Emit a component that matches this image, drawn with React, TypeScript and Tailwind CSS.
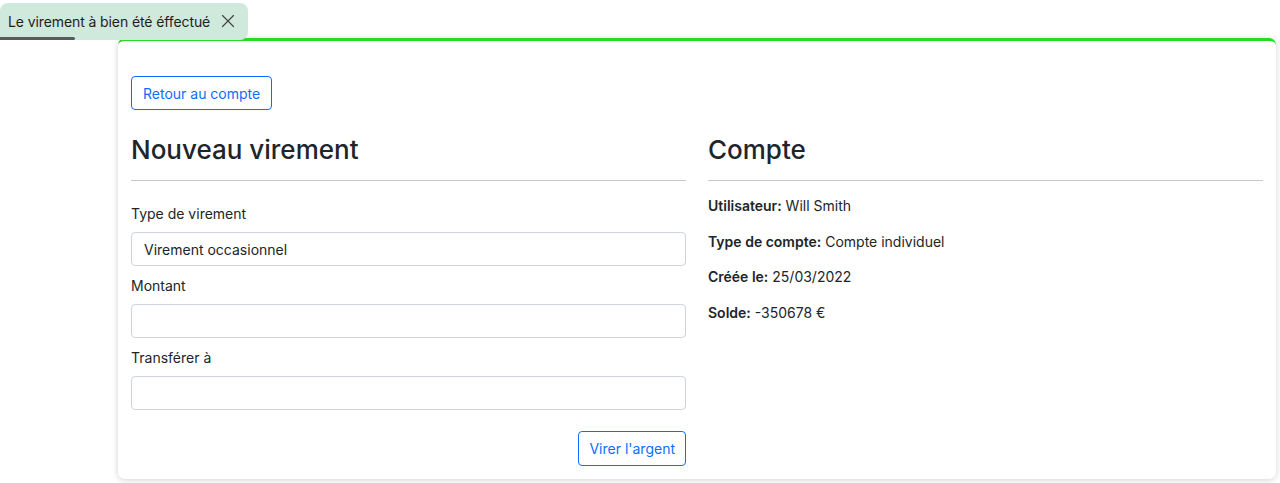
import { X } from 'lucide-react';

const font = { fontFamily: 'Inter, "Noto Sans", sans-serif' };

function Field({ label, value }: { label: string; value?: string }) {
  return (
    <div className="flex flex-col">
      <label className="text-[14px] text-[#212529] h-[20px] leading-[20px] mb-[8px]">{label}</label>
      <div className="h-[34px] rounded-[4px] border border-[#ced4da] bg-white px-[12px] flex items-center text-[14px] text-[#212529]">
        {value}
      </div>
    </div>
  );
}

function Info({ k, v }: { k: string; v: string }) {
  return (
    <p className="text-[14px] text-[#212529] leading-[20px] h-[35.5px]">
      <span className="font-semibold">{k}</span> {v}
    </p>
  );
}

export default function App() {
  return (
    <div className="relative w-[1280px] h-[483px] bg-white overflow-hidden" style={font}>
      {/* toast */}
      <div className="absolute left-0 top-[3px] z-10 w-[248px] h-[37px] rounded-r-[8px] rounded-tl-[8px] bg-[#cfe9dd] flex items-center pl-[8px] overflow-hidden whitespace-nowrap">
        <span className="text-[14px] text-[#1e1e1e] tracking-[-0.1px]">Le virement à bien été éffectué</span>
        <X className="absolute left-[217px] top-[7px] w-[22px] h-[22px] text-[#444]" strokeWidth={1.3} />
        <div className="absolute left-0 bottom-0 w-[75px] h-[3px] bg-[#555b5b] rounded-r-full" />
      </div>

      <div className="pt-[38px] pl-[118px] pr-[4px]">
        <div className="rounded-[7px] border-t-[3px] border-t-[#22dd22] bg-white shadow-[0_1px_6px_rgba(0,0,0,0.18)] px-[13px] pt-[35px] pb-[13px] h-[441px]">
          <button className="h-[34px] px-[11px] rounded-[4px] border border-[#0d6efd] text-[#0d6efd] text-[14px] bg-white">
            Retour au compte
          </button>

          <div className="grid grid-cols-2 gap-[22px] mt-[18px]">
            <div>
              <h2 className="text-[26px] font-medium text-[#212529] leading-[44px] h-[44px]">Nouveau virement</h2>
              <hr className="mt-[8px] border-[#c6c8ca]" />
              <div className="flex flex-col gap-[10px] mt-[23px]">
                <Field label="Type de virement" value="Virement occasionnel" />
                <Field label="Montant" />
                <Field label="Transférer à" />
              </div>
              <div className="flex justify-end mt-[21px]">
                <button className="h-[35px] px-[10px] rounded-[4px] border border-[#0d6efd] text-[#0d6efd] text-[14px] bg-white">
                  Virer l'argent
                </button>
              </div>
            </div>
            <div>
              <h2 className="text-[26px] font-medium text-[#212529] leading-[44px] h-[44px]">Compte</h2>
              <hr className="mt-[8px] border-[#c6c8ca]" />
              <div className="mt-[15px]">
                <Info k="Utilisateur:" v="Will Smith" />
                <Info k="Type de compte:" v="Compte individuel" />
                <Info k="Créée le:" v="25/03/2022" />
                <Info k="Solde:" v="-350678 €" />
              </div>
            </div>
          </div>
        </div>
      </div>
    </div>
  );
}
